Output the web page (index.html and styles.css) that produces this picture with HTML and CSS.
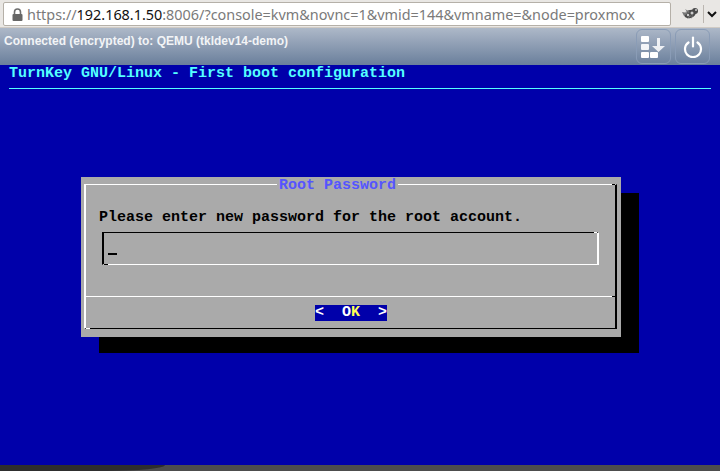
FILE: index.html
```html
<!DOCTYPE html>
<html lang="en">
<head>
<meta charset="utf-8">
<title>TurnKey console</title>
<link rel="stylesheet" href="styles.css">
</head>
<body>
<div class="app">
  <header class="browser">
    <div class="urlbar">
      <svg class="lock" width="11" height="13" viewBox="0 0 11 13"><path d="M2.500 6V4a3 3 0 0 1 6 0v2" fill="none" stroke="#6e6e6e" stroke-width="1.6"/><rect x="0.500" y="6" width="10" height="7" rx="1" fill="#666"/></svg>
      <span class="url">https://<b>192.168.1.50</b>:8006/?console=kvm&amp;novnc=1&amp;vmid=144&amp;vmname=&amp;node=proxmox</span>
    </div>
    <div class="addon">
      <svg width="18" height="14" viewBox="0 0 18 14"><g fill="#4a4a4a"><ellipse cx="8" cy="7" rx="6" ry="4" transform="rotate(-20 8 7)"/><circle cx="13" cy="4" r="3"/></g><path d="M0 5l6 1-4 3zM3 2l5 3-2 1zM5 12l3-4 1 1zM9 12l1-4 1 1z" fill="#777"/><g fill="#ccc"><circle cx="10" cy="6" r="1.500"/><circle cx="6" cy="8" r="1.200"/><circle cx="14" cy="3" r="1"/><circle cx="4" cy="5" r=".8"/></g></svg>
      <span class="sep"></span>
      <svg width="10" height="7" viewBox="0 0 10 7"><path d="M1 1l4 4 4-4" fill="none" stroke="#111" stroke-width="2"/></svg>
    </div>
  </header>
  <div class="toolbar">
    <span class="status">Connected (encrypted) to: QEMU (tkldev14-demo)</span>
    <div class="tools">
      <button class="tool" aria-label="Send keys">
        <svg width="26" height="24" viewBox="0 0 26 24"><g fill="#fff"><rect x="0" y="1" width="8" height="6" rx="1"/><rect x="0" y="9" width="8" height="6" opacity=".9" rx="1"/><rect x="0" y="17" width="8" height="6" rx="1"/><rect x="9" y="17" width="8" height="6" rx="1"/><path d="M16 3h3v8h5l-6.500 6-6.500-6h5z" opacity=".85"/></g></svg>
      </button>
      <button class="tool" aria-label="Power">
        <svg width="20" height="22" viewBox="0 0 20 22"><g fill="none" stroke="#fff" stroke-width="2.200" stroke-linecap="round"><path d="M5.500 6.500a8 8 0 1 0 9 0"/><path d="M10 1.500v9"/></g></svg>
      </button>
    </div>
  </div>
  <main class="screen">
    <div class="heading">TurnKey GNU/Linux - First boot configuration</div>
    <div class="rule"></div>
    <section class="dialog">
      <div class="frame">
        <span class="legend">Root Password</span>
        <p class="prompt">Please enter new password for the root account.</p>
        <div class="field"><span class="cursor"></span></div>
        <div class="divider"></div>
        <div class="actions"><span class="ok"><span>&lt;</span><span class="label">O<span class="hot">K</span></span><span>&gt;</span></span></div>
      </div>
    </section>
  </main>
  <footer class="taskbar"><div class="taskbar-shade"></div></footer>
</div>
</body>
</html>
```
FILE: styles.css
```css
html, body { margin: 0; padding: 0; background: #0000aa; overflow: hidden; }
.app { width: 720px; height: 471px; display: flex; flex-direction: column; overflow: hidden; }

.browser { height: 28px; box-sizing: border-box; background: #e9e7e4; display: flex; align-items: flex-start; border-bottom: 1px solid #cfcac4; }
.urlbar { margin: 2px 0 0 3px; width: 668px; height: 24px; box-sizing: border-box; background: #fff; border: 1px solid #b5b0a8; border-radius: 2px; display: flex; align-items: center; padding-left: 8px; gap: 4px; }
.url { font: 14.4px "Noto Sans", sans-serif; color: #7a7a7a; white-space: nowrap; }
.url b { font-weight: 400; color: #111; }
.addon { margin: 5px 0 0 11px; display: flex; align-items: center; gap: 3px; }
.sep { width: 1px; height: 18px; background: #bbb6b0; }

.toolbar { height: 37px; background: linear-gradient(#adb8c8, #6a7f9c); display: flex; align-items: flex-start; justify-content: space-between; }
.status { font: bold 12px "Liberation Sans", sans-serif; color: #f2f4f6; margin: 6px 0 0 4px; white-space: nowrap; }
.tools { display: flex; gap: 4px; margin: 1px 10px 0 0; }
.tool { width: 35px; height: 35px; box-sizing: border-box; padding: 0; background: transparent; border: 1px solid #8a9cb6; border-radius: 6px; display: flex; align-items: center; justify-content: center; }

.screen { flex: 1; background: #0000aa; font: bold 15px/16px "Liberation Mono", monospace; padding-left: 9px; }
.heading { color: #55ffff; white-space: pre; height: 16px; padding-top: 1px; margin-bottom: -1px; }
.rule { height: 1px; background: #55ffff; width: 702px; margin-top: 7px; }
.dialog { margin: 88px 0 0 72px; width: 540px; height: 160px; box-sizing: border-box; padding: 7px 4px 8px 3px; background: #aaa; box-shadow: 18px 16px 0 #000; color: #000; }
.frame { position: relative; height: 145px; box-sizing: border-box; border-top: 1px solid #fff; border-left: 2px solid #fff; border-right: 2px solid #000; border-bottom: 1px solid #000; }
.frame::before { content: ""; position: absolute; top: -1px; right: 0; width: 3px; height: 1px; background: #000; }
.frame::after { content: ""; position: absolute; bottom: -1px; left: 0; width: 4px; height: 1px; background: #fff; }
.legend { position: absolute; left: 193px; top: -7px; padding: 0 2px; margin-left: -2px; background: #aaa; color: #5555ff; white-space: pre; line-height: 15px; height: 14px; }
.prompt { margin: 0; padding: 25px 0 0 13px; white-space: pre; height: 15px; }
.field { position: relative; margin: 7px 0 0 16px; width: 497px; height: 33px; box-sizing: border-box; border-top: 1px solid #000; border-left: 2px solid #000; border-right: 2px solid #fff; border-bottom: 1px solid #fff; }
.field::before { content: ""; position: absolute; top: -1px; right: 0; width: 3px; height: 1px; background: #fff; }
.field::after { content: ""; position: absolute; bottom: -1px; left: 0; width: 4px; height: 1px; background: #000; }
.cursor { position: absolute; left: 4px; top: 20px; width: 9px; height: 2px; background: #000; }
.divider { position: relative; margin-top: 31px; height: 1px; background: #fff; }
.divider::after { content: ""; position: absolute; right: 0; top: 0; width: 3px; height: 1px; background: #000; }
.actions { display: flex; padding: 8px 0 0 229px; }
.ok { width: 72px; height: 16px; background: #0000aa; color: #fff; display: flex; justify-content: space-between; white-space: pre; padding-top: 0; }
.hot { color: #ffff55; }

.taskbar { height: 6px; background: #4d4d4d; }
.taskbar-shade { width: 165px; height: 6px; background: #2e2e2e; border-bottom-right-radius: 60px 6px; }
```
